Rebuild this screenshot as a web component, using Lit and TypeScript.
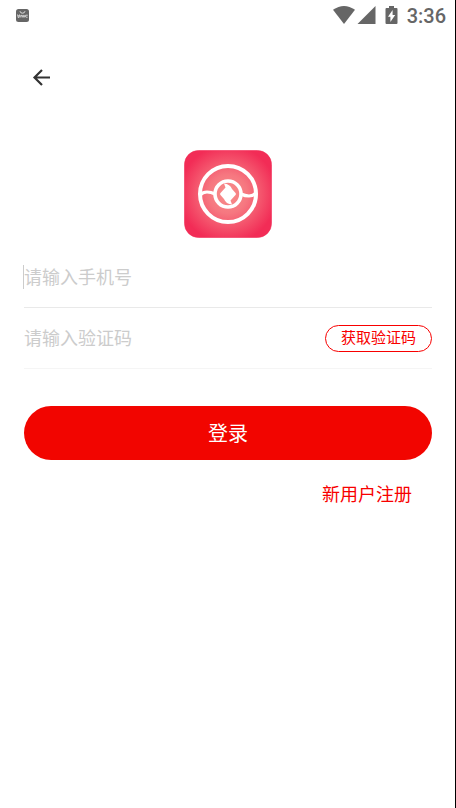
import { LitElement, html, css } from "lit";
import { customElement } from "lit/decorators.js";

@customElement("status-bar")
class StatusBar extends LitElement {
  static styles = css`
    :host {
      display: flex;
      align-items: center;
      justify-content: space-between;
      height: 30px;
      padding: 0 10px 0 16px;
      color: #666;
    }
    .system {
      display: flex;
      align-items: center;
    }
    svg {
      display: block;
    }
    .battery {
      margin: 0 9px;
    }
    .time {
      padding-top: 2px;
      font: 500 20px/30px Roboto, sans-serif;
    }
  `;

  render() {
    return html`
      <svg width="13" height="13" viewBox="0 0 13 13" aria-hidden="true">
        <rect width="13" height="13" rx="2.5" fill="#666" />
        <path d="M4 2.2q.3 2 2.5 2T9 2.2" fill="none" stroke="#ddd" stroke-width="1" />
        <path d="M1 6h1v2.4h1V6h1v2.4M5 8.4V6.4h1.4v2M7.4 8.4v-2h1V8.4M9.6 6.2v2M9.6 6.2h2.2M10 8.2h1.6" fill="none" stroke="#ddd" stroke-width=".9" />
      </svg>
      <div class="system">
        <svg width="43" height="20" viewBox="0 0 43 20" aria-hidden="true">
          <path d="M0 4.8Q11-2.8 22 4.8L11 19z" fill="#666" />
          <path d="M42.5 1v18H24.5z" fill="#666" />
        </svg>
        <svg class="battery" width="13" height="20" viewBox="0 0 13 20" aria-hidden="true">
          <path d="M4 1h5v2h2.5q1 0 1 1v14q0 1-1 1h-10q-1 0-1-1V4q0-1 1-1H4z" fill="#666" />
          <path d="M7.6 5v5h2.6l-4.8 7v-5.2H3z" fill="#fff" />
        </svg>
        <span class="time">3:36</span>
      </div>
    `;
  }
}

@customElement("app-root")
class AppRoot extends LitElement {
  static styles = css`
    :host {
      display: block;
      box-sizing: border-box;
      min-height: 100vh;
      background: #fff;
      box-shadow: inset -1px 0 #000;
      font-family: "Noto Sans CJK SC", sans-serif;
    }
    button,
    input {
      box-sizing: border-box;
      font-family: inherit;
      margin: 0;
      padding: 0;
      border: 0;
      background: none;
    }
    svg {
      display: block;
    }
    .bar {
      padding: 34px 28px 32px;
    }
    .back {
      display: block;
      padding: 1px;
    }
    .logo {
      margin: 28px auto 9px;
    }
    .form {
      padding: 0 24px;
    }
    .row {
      position: relative;
      display: flex;
      align-items: center;
      height: 60px;
      border-bottom: 1px solid #e9e9e9;
    }
    .row.code {
      border-color: #f5f5f5;
    }
    .row.active::before {
      content: "";
      position: absolute;
      left: -1px;
      top: 18px;
      width: 1px;
      height: 24px;
      background: #ccc;
    }
    .field {
      flex: 1;
      min-width: 0;
      height: 40px;
      padding-bottom: 2px;
      font-size: 18px;
      color: #333;
      outline: none;
    }
    .field::placeholder {
      color: #ccc;
      opacity: 1;
    }
    .send {
      height: 27px;
      padding: 0 15px 2px;
      border: 1px solid #f80000;
      border-radius: 14px;
      color: #f80000;
      font-size: 15px;
      line-height: 22px;
    }
    .login {
      display: block;
      width: 100%;
      height: 54px;
      margin-top: 37px;
      padding-bottom: 2px;
      border-radius: 27px;
      background: #f20500;
      color: #fff;
      font-size: 20px;
    }
    .links {
      display: flex;
      justify-content: flex-end;
      padding: 19px 20px 0;
    }
    .register {
      color: #f80000;
      font-size: 18px;
      line-height: 28px;
      text-decoration: none;
    }
  `;

  render() {
    return html`
      <status-bar></status-bar>
      <header class="bar">
        <button class="back" aria-label="返回">
          <svg width="24" height="24" viewBox="0 0 24 24" fill="none" stroke="#333" stroke-width="2.2">
            <path d="M21 12.5H6M13 5l-7.5 7.5L13 20" />
          </svg>
        </button>
      </header>
      <svg class="logo" width="88" height="88" viewBox="0 0 88 88" aria-hidden="true">
        <defs>
          <radialGradient id="glow" r=".56">
            <stop offset="0" stop-color="#f8908c" />
            <stop offset=".4" stop-color="#f67780" />
            <stop offset="1" stop-color="#f22c56" />
          </radialGradient>
        </defs>
        <rect x=".5" y=".5" width="87" height="87" rx="14" fill="url(#glow)" stroke="#f22c56" stroke-opacity=".6" />
        <g fill="none" stroke="#fff">
          <circle cx="44" cy="44" r="28" stroke-width="4" />
          <circle cx="44" cy="44" r="13" stroke-width="3.6" />
          <path d="M16 45q3-3 7-3t8 2M57 44q4 2 8 2t7-3" stroke-width="3.2" />
        </g>
        <path d="M40 33.5q6 .5 8 5.5l3.500 4q1 1 0 2L46.500 50.500l1.500 4q-6-.5-8-5.500l-3.500-4q-1-1 0-2L41.500 37.500z" fill="#fff" />
      </svg>
      <form class="form" @submit=${(e: Event) => e.preventDefault()}>
        <div class="row active">
          <input class="field" type="tel" aria-label="手机号" placeholder="请输入手机号" />
        </div>
        <div class="row code">
          <input class="field" type="text" aria-label="验证码" placeholder="请输入验证码" />
          <button class="send" type="button">获取验证码</button>
        </div>
        <button class="login" type="submit">登录</button>
        <div class="links"><a class="register" href="#register">新用户注册</a></div>
      </form>
    `;
  }
}
